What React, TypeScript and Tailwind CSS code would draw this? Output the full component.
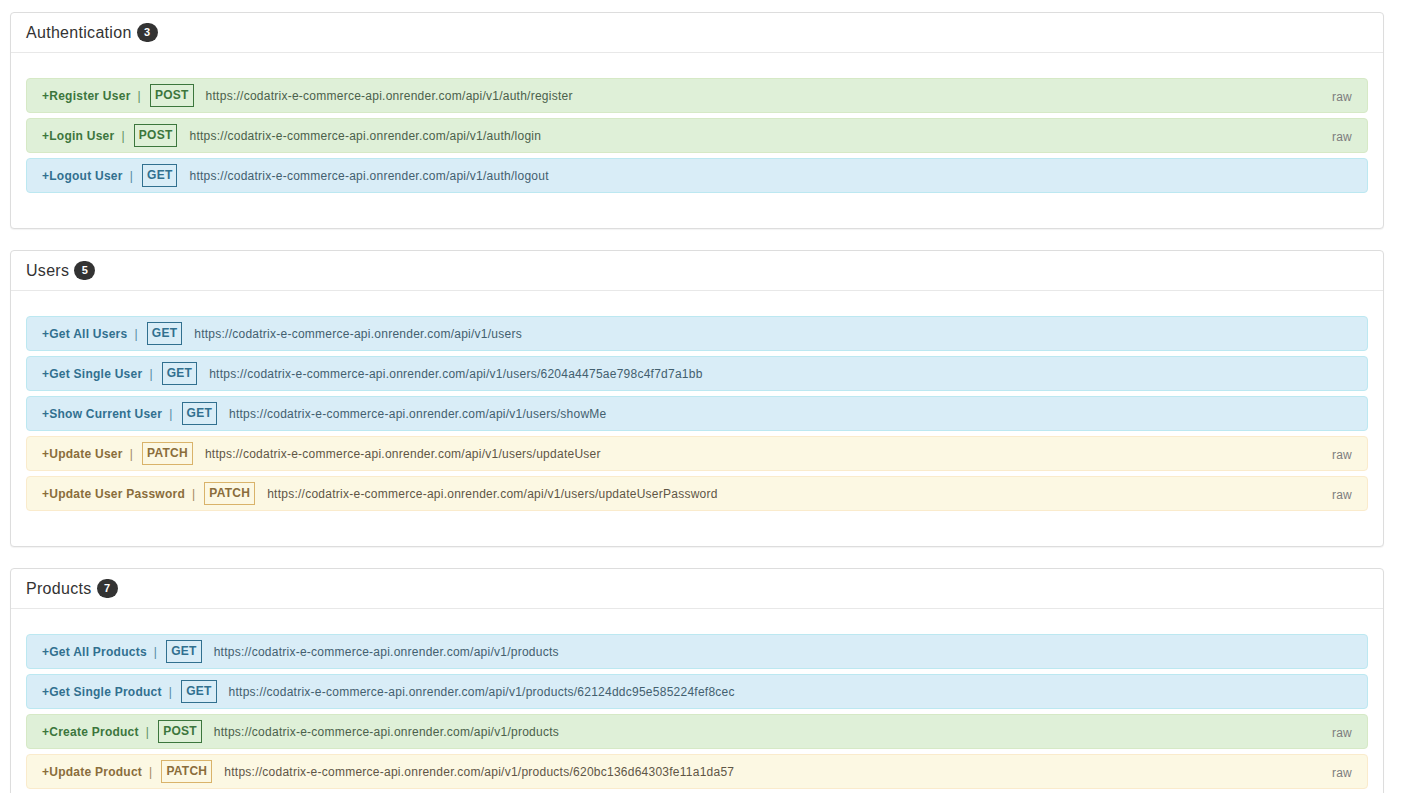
const BASE = "https://codatrix-e-commerce-api.onrender.com/api/v1";

type Kind = "GET" | "POST" | "PATCH";

type Endpoint = {
  name: string;
  method: Kind;
  path: string;
  raw?: boolean;
};

const styles: Record<Kind, { row: string; box: string; url: string }> = {
  GET: {
    row: "bg-[#d9edf7] border-[#bce8f1] text-[#31708f]",
    box: "border-[#31708f]",
    url: "text-[#43606f]",
  },
  POST: {
    row: "bg-[#dff0d8] border-[#d6e9c6] text-[#3c763d]",
    box: "border-[#3c763d]",
    url: "text-[#4b614b]",
  },
  PATCH: {
    row: "bg-[#fcf8e3] border-[#faebcc] text-[#8a6d3b]",
    box: "border-[#d9b36a]",
    url: "text-[#5f5646]",
  },
};

// only the rows visible on screen are listed; count is the real total
const sections: { title: string; count: number; items: Endpoint[] }[] = [
  {
    title: "Authentication",
    count: 3,
    items: [
      { name: "Register User", method: "POST", path: "/auth/register", raw: true },
      { name: "Login User", method: "POST", path: "/auth/login", raw: true },
      { name: "Logout User", method: "GET", path: "/auth/logout" },
    ],
  },
  {
    title: "Users",
    count: 5,
    items: [
      { name: "Get All Users", method: "GET", path: "/users" },
      { name: "Get Single User", method: "GET", path: "/users/6204a4475ae798c4f7d7a1bb" },
      { name: "Show Current User", method: "GET", path: "/users/showMe" },
      { name: "Update User", method: "PATCH", path: "/users/updateUser", raw: true },
      { name: "Update User Password", method: "PATCH", path: "/users/updateUserPassword", raw: true },
    ],
  },
  {
    title: "Products",
    count: 7,
    items: [
      { name: "Get All Products", method: "GET", path: "/products" },
      { name: "Get Single Product", method: "GET", path: "/products/62124ddc95e585224fef8cec" },
      { name: "Create Product", method: "POST", path: "/products", raw: true },
      { name: "Update Product", method: "PATCH", path: "/products/620bc136d64303fe11a1da57", raw: true },
    ],
  },
];

const Row = ({ item }: { item: Endpoint }) => {
  const s = styles[item.method];
  return (
    <div
      className={`flex items-center h-[35px] border rounded-[4px] px-[15px] text-[12px] tracking-[0.25px] ${s.row}`}
    >
      <span className="font-bold">+{item.name}</span>
      <span className="ml-[7px] mr-[9px] opacity-80">|</span>
      <span className={`font-bold border px-[4px] leading-[21px] ${s.box}`}>
        {item.method}
      </span>
      <span className={`ml-[12px] ${s.url}`}>{BASE + item.path}</span>
      {item.raw && <span className="ml-auto pt-[3px] text-[#7d7d7d]">raw</span>}
    </div>
  );
};

export default function App() {
  return (
    <div className="min-h-screen bg-white pt-[12px] pl-[10px] pr-[27px] font-['Liberation_Sans',Arial,sans-serif] text-[#333]">
      {sections.map((sec) => (
        <div
          key={sec.title}
          className="mb-[21px] border border-[#dddddd] rounded-[4px] bg-white shadow-[0_1px_1px_rgba(0,0,0,0.05)]"
        >
          <div className="flex items-center gap-[5px] h-[40px] px-[15px] border-b border-[#e8e8e8]">
            <span className="text-[16px] tracking-[0.3px]">{sec.title}</span>
            <span className="inline-flex items-center justify-center h-[19px] min-w-[21px] px-[6px] rounded-full bg-[#333] text-white text-[11px] font-bold">
              {sec.count}
            </span>
          </div>
          <div className="flex flex-col gap-[5px] px-[15px] pt-[25px] pb-[35px]">
            {sec.items.map((it) => (
              <Row key={it.name} item={it} />
            ))}
          </div>
        </div>
      ))}
    </div>
  );
}
